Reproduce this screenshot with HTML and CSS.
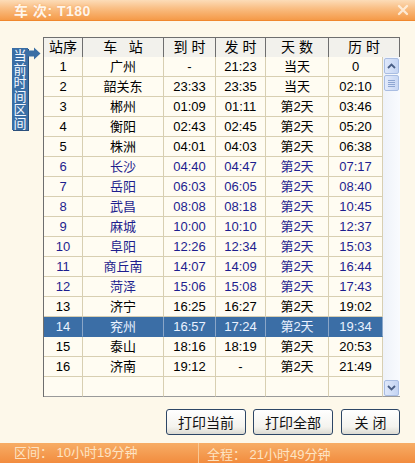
FILE: index.html
```html
<!DOCTYPE html>
<html lang="zh">
<head>
<meta charset="utf-8">
<title>车次 T180</title>
<link rel="stylesheet" href="styles.css">
</head>
<body>
<div class="window">
  <div class="titlebar">
    <span class="title">车 次: T180</span>
    <svg class="close" width="12" height="12" viewBox="0 0 12 12"><path d="M2 2 L10 10 M10 2 L2 10" stroke="#fff3e4" stroke-width="2.4" stroke-linecap="round"/></svg>
  </div>
  <div class="content">
    <div class="marker">
      <div class="tag">当<br>前<br>时<br>间<br>区<br>间</div>
      <svg class="arrow" width="13" height="13" viewBox="0 0 13 13"><path d="M0 3.5 H6 V0.5 L12.5 6.5 L6 12.5 V9.5 H0 Z" fill="#3a6ea5"/></svg>
    </div>
    <div class="grid">
      <div class="head">
        <div class="hc">站序</div><div class="hc">车&nbsp;&nbsp;&nbsp;站</div><div class="hc">到 时</div><div class="hc">发 时</div><div class="hc">天 数</div><div class="hc">历 时</div>
      </div>
      <div class="body">
        <div class="rows">
          <div class="row"><div>1</div><div>广州</div><div>-</div><div>21:23</div><div>当天</div><div>0</div></div>
          <div class="row"><div>2</div><div>韶关东</div><div>23:33</div><div>23:35</div><div>当天</div><div>02:10</div></div>
          <div class="row"><div>3</div><div>郴州</div><div>01:09</div><div>01:11</div><div>第2天</div><div>03:46</div></div>
          <div class="row"><div>4</div><div>衡阳</div><div>02:43</div><div>02:45</div><div>第2天</div><div>05:20</div></div>
          <div class="row"><div>5</div><div>株洲</div><div>04:01</div><div>04:03</div><div>第2天</div><div>06:38</div></div>
          <div class="row cur"><div>6</div><div>长沙</div><div>04:40</div><div>04:47</div><div>第2天</div><div>07:17</div></div>
          <div class="row cur"><div>7</div><div>岳阳</div><div>06:03</div><div>06:05</div><div>第2天</div><div>08:40</div></div>
          <div class="row cur"><div>8</div><div>武昌</div><div>08:08</div><div>08:18</div><div>第2天</div><div>10:45</div></div>
          <div class="row cur"><div>9</div><div>麻城</div><div>10:00</div><div>10:10</div><div>第2天</div><div>12:37</div></div>
          <div class="row cur"><div>10</div><div>阜阳</div><div>12:26</div><div>12:34</div><div>第2天</div><div>15:03</div></div>
          <div class="row cur"><div>11</div><div>商丘南</div><div>14:07</div><div>14:09</div><div>第2天</div><div>16:44</div></div>
          <div class="row cur"><div>12</div><div>菏泽</div><div>15:06</div><div>15:08</div><div>第2天</div><div>17:43</div></div>
          <div class="row"><div>13</div><div>济宁</div><div>16:25</div><div>16:27</div><div>第2天</div><div>19:02</div></div>
          <div class="row sel"><div>14</div><div>兖州</div><div>16:57</div><div>17:24</div><div>第2天</div><div>19:34</div></div>
          <div class="row"><div>15</div><div>泰山</div><div>18:16</div><div>18:19</div><div>第2天</div><div>20:53</div></div>
          <div class="row"><div>16</div><div>济南</div><div>19:12</div><div>-</div><div>第2天</div><div>21:49</div></div>
          <div class="row last"><div></div><div></div><div></div><div></div><div></div><div></div></div>
        </div>
        <div class="scroll">
          <div class="sbtn"><svg width="9" height="6" viewBox="0 0 9 6"><path d="M1 5 L4.5 1.5 L8 5" fill="none" stroke="#4a5f86" stroke-width="1.8"/></svg></div>
          <div class="thumb"><span></span><span></span><span></span><span></span></div>
          <div class="track"></div>
          <div class="sbtn"><svg width="9" height="6" viewBox="0 0 9 6"><path d="M1 1 L4.5 4.5 L8 1" fill="none" stroke="#4a5f86" stroke-width="1.8"/></svg></div>
        </div>
      </div>
    </div>
  </div>
  <div class="actions">
    <button class="btn wide">打印当前</button>
    <button class="btn wide">打印全部</button>
    <button class="btn narrow">关 闭</button>
  </div>
  <div class="status">
    <span class="seg first">区间： 10小时19分钟</span>
    <span class="seg">全程： 21小时49分钟</span>
  </div>
</div>
</body>
</html>
```
FILE: styles.css
```css
* { box-sizing: border-box; }
body {
  margin: 0;
  background: #fdf8ea;
  font-family: "Liberation Sans", "Noto Sans CJK SC", sans-serif;
  font-size: 13px;
  color: #000;
  overflow: hidden;
}
.window {
  width: 415px;
  height: 463px;
  display: flex;
  flex-direction: column;
  background: #fdf8ea;
}
.titlebar {
  height: 21px;
  border-bottom: 1px solid #f0882e;
  background: linear-gradient(#fcdcb8, #f9bc80 45%, #f59a48);
  display: flex;
  align-items: center;
  justify-content: space-between;
  padding: 0 6px 0 14px;
}
.title {
  color: #fff5ea;
  font-size: 14px;
  font-weight: bold;
  letter-spacing: 0.5px;
  text-shadow: 0 0 2px #f3a45c;
}
.close { opacity: 0.85; }
.content {
  display: flex;
  padding: 16px 0 0 12px;
}
.marker {
  width: 31px;
  display: flex;
  align-items: flex-start;
  padding-top: 11px;
}
.tag {
  width: 16px;
  height: 82px;
  background: #3a6ea5;
  box-shadow: 1px 1px 0 #2b507c;
  color: #f4f8ff;
  font-size: 13px;
  line-height: 13.6px;
  text-align: center;
  padding-top: 1px;
}
.arrow { margin-top: -1px; }
.grid {
  width: 357px;
  border-left: 1px solid #6e6e6e;
}
.head {
  display: grid;
  grid-template-columns: 39px 81px 52px 50px 63px 71px;
  border-top: 1px solid #6e6e6e;
  height: 20px;
}
.hc {
  height: 20px;
  border-right: 1px solid #6e6e6e;
  border-bottom: 1px solid #6e6e6e;
  background: #f2f1ec;
  font-size: 14px;
  line-height: 19px;
  text-align: center;
}
.body {
  display: flex;
}
.rows { width: 340px; }
.row {
  display: grid;
  grid-template-columns: 39px 81px 52px 50px 63px 54px;
  height: 20px;
}
.row > div {
  border-right: 1px solid #d8cfb2;
  border-bottom: 1px solid #d8cfb2;
  background: #fffcf2;
  text-align: center;
  line-height: 19px;
  white-space: nowrap;
}
.row.cur > div { color: #1e1e8e; }
.row.sel > div {
  background: #3b6ea6;
  color: #eaf2ff;
  border-right-color: #8aa6c8;
  border-bottom-color: #3b6ea6;
}
.row.last > div { border-bottom-color: #9a9a9a; }
.scroll {
  width: 17px;
  height: 340px;
  display: flex;
  flex-direction: column;
  background: linear-gradient(90deg, #eef2f9, #f9fbfe);
  border-bottom: 1px solid #9a9a9a;
  padding: 1px 1px 0 1px;
}
.sbtn {
  height: 16px;
  border: 1px solid #a9bde2;
  border-radius: 2px;
  background: linear-gradient(90deg, #dfe8fa, #c4d4f3);
  display: flex;
  align-items: center;
  justify-content: center;
}
.thumb {
  height: 16px;
  margin-top: 1px;
  border: 1px solid #a9bde2;
  border-radius: 2px;
  background: linear-gradient(90deg, #e2eafb, #c8d7f4);
  display: flex;
  flex-direction: column;
  align-items: center;
  justify-content: center;
  gap: 1px;
}
.thumb span {
  width: 7px;
  height: 1px;
  background: #8ea6d2;
}
.track { flex: 1; }
.actions {
  display: flex;
  justify-content: flex-end;
  gap: 7px;
  padding: 12px 15px 0 0;
}
.btn {
  height: 26px;
  border: 1px solid #2d4666;
  border-radius: 3px;
  background: linear-gradient(#ffffff, #f4f3ee 70%, #dcdad2);
  font-family: "Liberation Sans", "Noto Sans CJK SC", sans-serif;
  font-size: 14px;
  color: #111;
  padding: 0;
}
.btn.wide { width: 80px; }
.btn.narrow { width: 59px; margin-left: 1px; }
.status {
  margin-top: auto;
  height: 20px;
  background: linear-gradient(#f7ad66, #f28c3e);
  display: flex;
  align-items: center;
  color: #fde4c4;
  font-size: 13px;
}
.seg { padding-left: 14px; }
.seg.first {
  width: 199px;
  border-right: 1px solid #f9c894;
  height: 20px;
  line-height: 20px;
}
.seg + .seg { padding-left: 8px; }
```
